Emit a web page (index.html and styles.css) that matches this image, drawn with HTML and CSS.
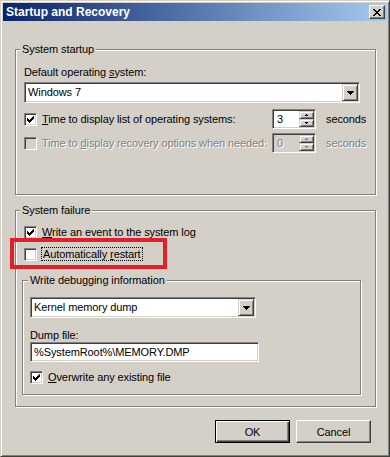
FILE: index.html
```html
<!doctype html>
<html>
  <head>
    <meta charset="utf-8">
    <title>Startup and Recovery</title>
    <link rel="stylesheet" href="styles.css">
  </head>
  <body>
    <div class="window">
      <div class="titlebar">
        <span class="title">Startup and Recovery</span>
        <span class="close">
          <svg width="8" height="7" viewBox="0 0 8 7" shape-rendering="crispEdges"><path d="M0 0h2v1h-2z M6 0h2v1h-2z M1 1h2v1h-2z M5 1h2v1h-2z M2 2h4v1h-4z M3 3h2v1h-2z M2 4h4v1h-4z M1 5h2v1h-2z M5 5h2v1h-2z M0 6h2v1h-2z M6 6h2v1h-2z" fill="#000"/></svg>
        </span>
      </div>

      <div class="content">

        <div class="group startup">
          <span class="group-title">System startup</span>
          <div class="label gap-label">Default operating <u>s</u>ystem:</div>
          <div class="combo os-combo">
            <span class="combo-text">Windows 7</span>
            <span class="drop"><svg width="7" height="4" viewBox="0 0 7 4" shape-rendering="crispEdges"><path d="M0 0h7v1h-7z M1 1h5v1h-5z M2 2h3v1h-3z M3 3h1v1h-1z" fill="#000"/></svg></span>
          </div>

          <div class="opt-row first-opt">
            <div class="opt-label">
              <span class="checkbox"><svg width="9" height="9" viewBox="0 0 9 9" shape-rendering="crispEdges"><path d="M1 3h1v3h-1z M2 4h1v3h-1z M3 5h1v3h-1z M4 4h1v3h-1z M5 3h1v3h-1z M6 2h1v3h-1z M7 1h1v3h-1z" fill="#000"/></svg></span>
              <span><u>T</u>ime to display list of operating systems:</span>
            </div>
            <div class="spin">
              <span class="spin-text">3</span>
              <span class="spin-btns">
                <span class="spin-btn"><svg width="3" height="2" viewBox="0 0 3 2" shape-rendering="crispEdges"><path d="M1 0h1v1h-1z M0 1h3v1h-3z" fill="#000"/></svg></span>
                <span class="spin-btn"><svg width="3" height="2" viewBox="0 0 3 2" shape-rendering="crispEdges"><path d="M0 0h3v1h-3z M1 1h1v1h-1z" fill="#000"/></svg></span>
              </span>
            </div>
            <span class="unit">seconds</span>
          </div>

          <div class="opt-row disabled">
            <div class="opt-label">
              <span class="checkbox off"></span>
              <span>Time to <u>d</u>isplay recovery options when needed:</span>
            </div>
            <div class="spin off">
              <span class="spin-text">0</span>
              <span class="spin-btns">
                <span class="spin-btn"><svg width="3" height="2" viewBox="0 0 3 2" shape-rendering="crispEdges"><path d="M1 0h1v1h-1z M0 1h3v1h-3z" fill="#808080"/></svg></span>
                <span class="spin-btn"><svg width="3" height="2" viewBox="0 0 3 2" shape-rendering="crispEdges"><path d="M0 0h3v1h-3z M1 1h1v1h-1z" fill="#808080"/></svg></span>
              </span>
            </div>
            <span class="unit">seconds</span>
          </div>
        </div>

        <div class="group failure">
          <span class="group-title">System failure</span>

          <div class="check-row event-row">
            <span class="checkbox"><svg width="9" height="9" viewBox="0 0 9 9" shape-rendering="crispEdges"><path d="M1 3h1v3h-1z M2 4h1v3h-1z M3 5h1v3h-1z M4 4h1v3h-1z M5 3h1v3h-1z M6 2h1v3h-1z M7 1h1v3h-1z" fill="#000"/></svg></span>
            <span><u>W</u>rite an event to the system log</span>
          </div>

          <div class="check-row restart-row">
            <span class="checkbox"></span>
            <span class="focused">Automatically <u>r</u>estart</span>
            <span class="highlight"></span>
          </div>

          <div class="group inner">
            <span class="group-title">Write debugging information</span>
            <div class="combo dump-combo">
              <span class="combo-text">Kernel memory dump</span>
              <span class="drop"><svg width="7" height="4" viewBox="0 0 7 4" shape-rendering="crispEdges"><path d="M0 0h7v1h-7z M1 1h5v1h-5z M2 2h3v1h-3z M3 3h1v1h-1z" fill="#000"/></svg></span>
            </div>
            <div class="label dump-label">Dump file:</div>
            <div class="textbox">%SystemRoot%\MEMORY.DMP</div>
            <div class="check-row overwrite-row">
              <span class="checkbox"><svg width="9" height="9" viewBox="0 0 9 9" shape-rendering="crispEdges"><path d="M1 3h1v3h-1z M2 4h1v3h-1z M3 5h1v3h-1z M4 4h1v3h-1z M5 3h1v3h-1z M6 2h1v3h-1z M7 1h1v3h-1z" fill="#000"/></svg></span>
              <span><u>O</u>verwrite any existing file</span>
            </div>
          </div>
        </div>

        <div class="buttons">
          <button class="btn default">OK</button>
          <button class="btn">Cancel</button>
        </div>

      </div>
    </div>
  </body>
</html>
```

FILE: styles.css
```css
* {
  box-sizing: border-box;
}
body {
  margin: 0;
  background: #d4d0c8;
  font-family: "Liberation Sans", Arial, sans-serif;
  font-size: 11px;
  letter-spacing: -0.1px;
  color: #000;
}
u {
  text-decoration: underline;
  text-underline-offset: 1px;
}

/* window frame */
.window {
  width: 390px;
  height: 457px;
  background: #d4d0c8;
  border: 1px solid;
  border-color: #d4d0c8 #404040 #404040 #d4d0c8;
  box-shadow: inset 1px 1px #fff, inset -1px -1px #808080;
  padding: 2px;
  display: flex;
  flex-direction: column;
}
.titlebar {
  height: 18px;
  flex: none;
  display: flex;
  align-items: center;
  justify-content: space-between;
  padding: 0 2px 0 3px;
  background: linear-gradient(to right, #0a246a, #a6caf0);
  color: #fff;
  font-weight: bold;
  font-size: 12px;
  letter-spacing: 0;
}
.close {
  width: 16px;
  height: 14px;
  display: flex;
  align-items: center;
  justify-content: center;
  background: #d4d0c8;
  border: 1px solid;
  border-color: #fff #404040 #404040 #fff;
  box-shadow: inset -1px -1px #808080, inset 1px 1px #d4d0c8;
}
.content {
  flex: 1;
  padding: 28px 11px 0 12px;
}

/* group boxes */
.group {
  border: 1px solid #808080;
  box-shadow: inset 1px 1px #fff, 1px 1px #fff;
  padding: 0 8px;
}
.group-title {
  display: block;
  width: max-content;
  margin: -7px 0 0 -4px;
  padding: 0 2px;
  line-height: 13px;
  background: #d4d0c8;
}
.startup {
  height: 146px;
}
.failure {
  height: 197px;
  margin-top: 15px;
}
.inner {
  width: 339px;
  height: 115px;
  margin: 19px 0 0 -2px;
  padding: 0 7px;
}
.inner .group-title {
  margin-left: -2px;
}

.label {
  line-height: 13px;
}
.gap-label {
  margin-top: 10px;
}
.dump-label {
  margin-top: 11px;
}

/* sunken fields */
.combo,
.textbox,
.spin {
  background: #fff;
  border: 1px solid;
  border-color: #808080 #fff #fff #808080;
  box-shadow: inset 1px 1px #404040, inset -1px -1px #d4d0c8;
  padding: 1px;
}
.combo {
  height: 21px;
  display: flex;
}
.os-combo {
  width: 336px;
  margin-top: 3px;
}
.dump-combo {
  width: 226px;
  margin-top: 10px;
}
.combo-text {
  flex: 1;
  padding-left: 2px;
  line-height: 17px;
}
.drop {
  width: 16px;
  display: flex;
  align-items: center;
  justify-content: center;
  background: #d4d0c8;
  border: 1px solid;
  border-color: #d4d0c8 #404040 #404040 #d4d0c8;
  box-shadow: inset 1px 1px #fff, inset -1px -1px #808080;
}
.textbox {
  width: 229px;
  height: 20px;
  padding-left: 3px;
  line-height: 16px;
}

/* option rows with spinners */
.opt-row {
  display: flex;
  align-items: center;
  height: 20px;
  margin-top: 4px;
}
.first-opt {
  margin-top: 6px;
}
.opt-label {
  width: 248px;
  display: flex;
  align-items: center;
  gap: 5px;
  white-space: nowrap;
}
.spin {
  width: 44px;
  height: 20px;
  display: flex;
}
.spin-text {
  flex: 1;
  padding-left: 3px;
  line-height: 16px;
}
.spin-btns {
  width: 15px;
  display: flex;
  flex-direction: column;
}
.spin-btn {
  flex: 1;
  display: flex;
  align-items: center;
  justify-content: center;
  background: #d4d0c8;
  border: 1px solid;
  border-color: #d4d0c8 #404040 #404040 #d4d0c8;
  box-shadow: inset 1px 1px #fff, inset -1px -1px #808080;
}
.spin.off {
  background: #d4d0c8;
}
.unit {
  margin-left: 10px;
}
.disabled {
  color: #808080;
  text-shadow: 1px 1px #fff;
}

/* checkboxes */
.checkbox {
  flex: none;
  width: 13px;
  height: 13px;
  padding: 1px;
  display: flex;
  background: #fff;
  border: 1px solid;
  border-color: #808080 #fff #fff #808080;
  box-shadow: inset 1px 1px #404040, inset -1px -1px #d4d0c8;
}
.checkbox.off {
  background: #d4d0c8;
}
.check-row {
  display: flex;
  align-items: center;
  gap: 5px;
  line-height: 13px;
  white-space: nowrap;
}
.event-row {
  margin-top: 9px;
}
.restart-row {
  position: relative;
  margin-top: 8px;
  gap: 4px;
}
.focused {
  line-height: 12px;
  padding: 0 1px;
  border: 1px dotted #000;
}
.highlight {
  position: absolute;
  left: -14px;
  top: -9px;
  width: 157px;
  height: 31px;
  border: 4px solid #e3202a;
}
.overwrite-row {
  margin-top: 9px;
}

/* dialog buttons */
.buttons {
  display: flex;
  justify-content: flex-end;
  gap: 6px;
  margin: 13px 5px 0 0;
}
.btn {
  width: 75px;
  height: 23px;
  padding: 0;
  font: inherit;
  letter-spacing: inherit;
  color: #000;
  background: #d4d0c8;
  border: 1px solid;
  border-color: #fff #404040 #404040 #fff;
  box-shadow: inset -1px -1px #808080, inset 1px 1px #d4d0c8;
}
.btn.default {
  border-color: #000;
  box-shadow: inset 1px 1px #fff, inset -1px -1px #404040, inset -2px -2px #808080;
}
```
